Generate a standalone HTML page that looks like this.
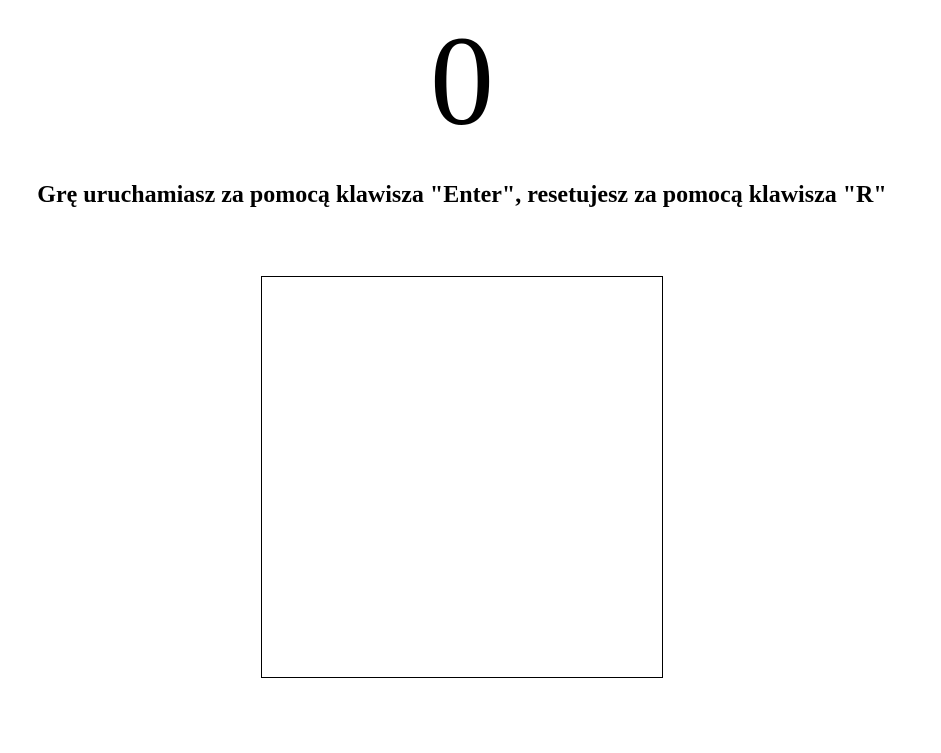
<!DOCTYPE html>
<html><head><meta charset="utf-8"><style>
html,body{margin:0;padding:0;background:#fff;width:941px;height:753px;overflow:hidden;font-family:"Liberation Serif",serif;color:#000}
#score{position:absolute;left:0;width:924px;text-align:center;font-size:128px;line-height:1;top:17px}
#info{position:absolute;left:0;width:924px;top:182px;text-align:center;font-size:24px;font-weight:bold;line-height:26px;white-space:nowrap}
#box{position:absolute;left:261px;top:276px;width:400px;height:400px;border:1px solid #000}
</style></head><body>
<div id="score">0</div>
<div id="info">Grę uruchamiasz za pomocą klawisza "Enter", resetujesz za pomocą klawisza "R"</div>
<div id="box"></div>
</body></html>
